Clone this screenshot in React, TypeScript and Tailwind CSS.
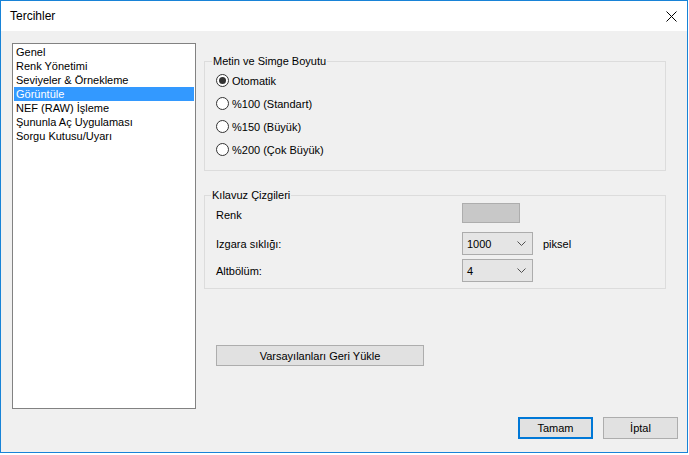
import { useState } from "react"

const font = { fontFamily: '"Liberation Sans", Arial, sans-serif' }

const items = [
  "Genel",
  "Renk Yönetimi",
  "Seviyeler & Örnekleme",
  "Görüntüle",
  "NEF (RAW) İşleme",
  "Şununla Aç Uygulaması",
  "Sorgu Kutusu/Uyarı",
]

const sizes = ["Otomatik", "%100 (Standart)", "%150 (Büyük)", "%200 (Çok Büyük)"]

const Chevron = () => (
  <svg width="9" height="5" viewBox="0 0 9 5" className="ml-auto mr-[6px]">
    <path d="M0.5 0.5 L4.5 4.5 L8.5 0.5" fill="none" stroke="#505050" strokeWidth="1" />
  </svg>
)

const Combo = ({ value }: { value: string }) => (
  <div className="flex items-center w-[71px] h-[23px] bg-[#e5e5e5] border border-[#acacac] pl-[4px] text-[11px] text-black">
    <span>{value}</span>
    <Chevron />
  </div>
)

export default function App() {
  const [selected, setSelected] = useState(3)
  const [size, setSize] = useState(0)

  return (
    <div className="w-[689px] h-[455px] bg-white text-[11px] leading-[14px] text-black" style={font}>
      <div className="w-[688px] h-[453px] border border-[#1883d7] flex flex-col">
        {/* title bar */}
        <div className="h-[30px] flex items-center bg-white pl-[9px] pr-[9px]">
          <span className="text-[12px]">Tercihler</span>
          <svg width="11" height="11" viewBox="0 0 11 11" className="ml-auto mr-[1px]">
            <path d="M0.5 0.5 L10.5 10.5 M10.5 0.5 L0.5 10.5" stroke="#000" strokeWidth="1" />
          </svg>
        </div>

        <div className="flex-1 bg-[#f0f0f0] flex flex-col">
          <div className="flex">
            {/* category list */}
            <div className="ml-[11px] mt-[12px] w-[184px] h-[366px] bg-white border border-[#828282] p-[1px]">
              {items.map((item, i) => (
                <div
                  key={item}
                  onClick={() => setSelected(i)}
                  className={
                    "h-[14px] pl-[2px] leading-[14px] whitespace-nowrap " +
                    (i === selected ? "bg-[#3399ff] text-white" : "")
                  }
                >
                  {item}
                </div>
              ))}
            </div>

            {/* right pane */}
            <div className="ml-[8px] pt-[30px] w-[462px] flex flex-col">
              <div className="relative h-[110px] border border-[#dcdcdc] pt-[7px] pl-[11px]">
                <span className="absolute -top-[7px] left-[7px] px-[1px] bg-[#f0f0f0] leading-[13px]">
                  Metin ve Simge Boyutu
                </span>
                {sizes.map((s, i) => (
                  <div key={s} className="h-[23px] flex items-center gap-[3px]" onClick={() => setSize(i)}>
                    <span className="w-[13px] h-[13px] rounded-full border border-[#333333] bg-white flex items-center justify-center">
                      {size === i && <span className="w-[7px] h-[7px] rounded-full bg-[#333333]" />}
                    </span>
                    <span>{s}</span>
                  </div>
                ))}
              </div>

              <div className="relative mt-[24px] h-[94px] border border-[#dcdcdc] pt-[7px] pl-[11px]">
                <span className="absolute -top-[7px] left-[6px] px-[1px] bg-[#f0f0f0] leading-[13px]">
                  Kılavuz Çizgileri
                </span>
                <div className="flex items-center h-[20px]">
                  <span className="w-[246px] pt-[3px]">Renk</span>
                  <div className="w-[58px] h-[20px] bg-[#c8c8c8] border border-[#adadad]" />
                </div>
                <div className="flex items-center mt-[9px]">
                  <span className="w-[246px]">Izgara sıklığı:</span>
                  <Combo value="1000" />
                  <span className="ml-[10px]">piksel</span>
                </div>
                <div className="flex items-center mt-[4px]">
                  <span className="w-[246px]">Altbölüm:</span>
                  <Combo value="4" />
                </div>
              </div>

              <div className="ml-[12px] mt-[56px] w-[208px] h-[21px] bg-[#e1e1e1] border border-[#adadad] flex items-center justify-center">
                Varsayılanları Geri Yükle
              </div>
            </div>
          </div>

          {/* dialog buttons */}
          <div className="flex justify-end gap-[10px] pr-[9px] mt-[8px]">
            <div className="w-[75px] h-[22px] bg-[#e1e1e1] border-2 border-[#0078d7] flex items-center justify-center">
              Tamam
            </div>
            <div className="w-[75px] h-[22px] bg-[#e1e1e1] border border-[#adadad] flex items-center justify-center">
              İptal
            </div>
          </div>
        </div>
      </div>
    </div>
  )
}
